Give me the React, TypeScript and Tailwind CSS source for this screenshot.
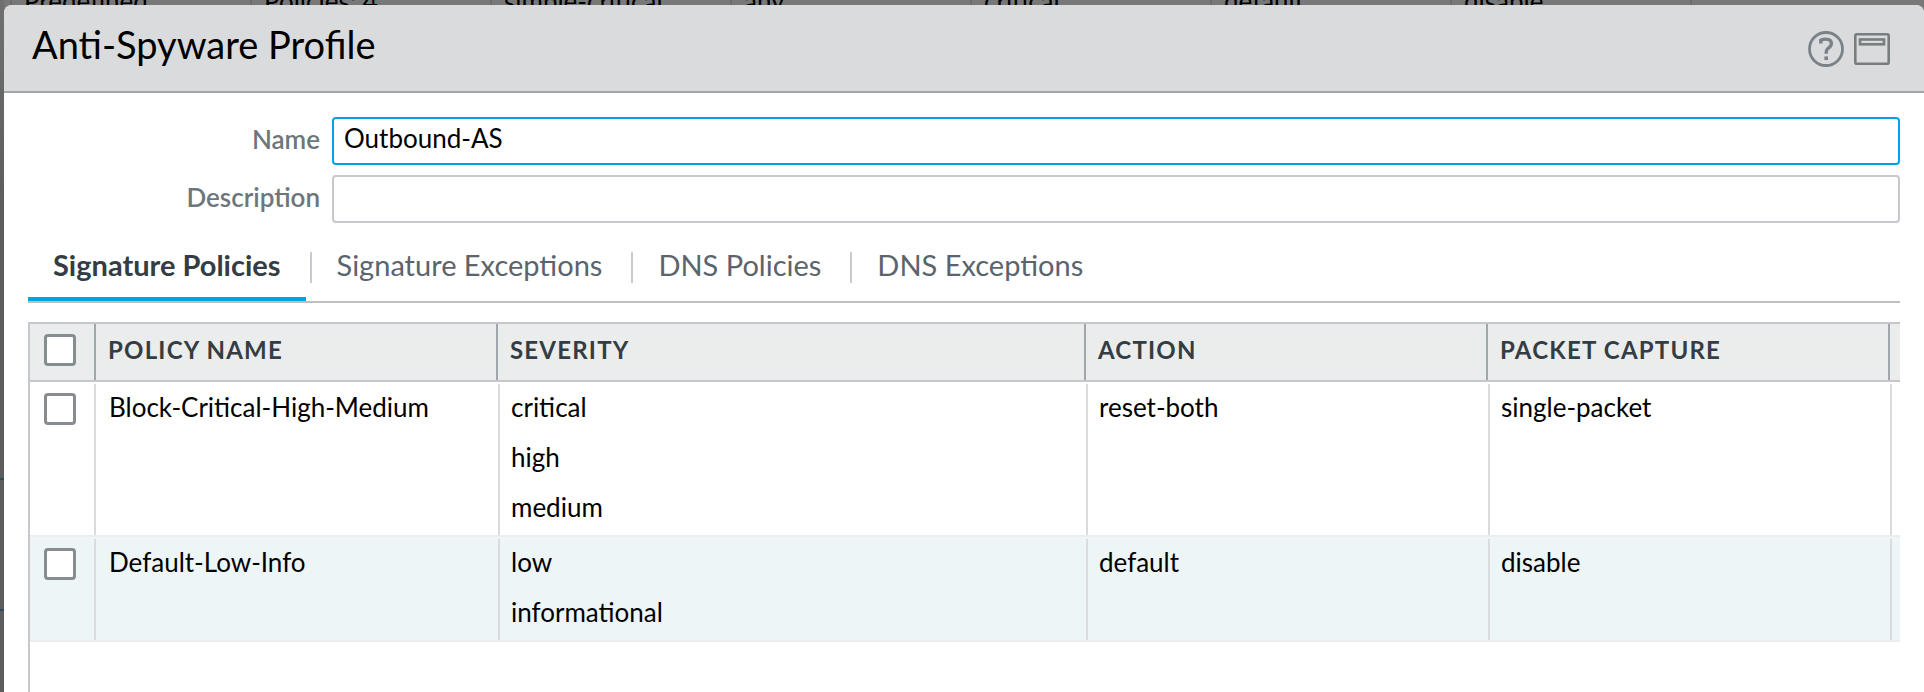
import { useState } from "react";

type Policy = {
  name: string;
  severity: string[];
  action: string;
  capture: string;
};

const policies: Policy[] = [
  {
    name: "Block-Critical-High-Medium",
    severity: ["critical", "high", "medium"],
    action: "reset-both",
    capture: "single-packet",
  },
  {
    name: "Default-Low-Info",
    severity: ["low", "informational"],
    action: "default",
    capture: "disable",
  },
];

const tabs = ["Signature Policies", "Signature Exceptions", "DNS Policies", "DNS Exceptions"];

const columns = ["Policy Name", "Severity", "Action", "Packet Capture"];

const backdropCells = ["Predefined", "Policies: 4", "simple-critical", "any", "critical", "default", "disable"];

function Checkbox({ label }: { label: string }) {
  return (
    <input
      type="checkbox"
      aria-label={label}
      className="block size-8 appearance-none rounded-sm border-3 border-[#868d92] bg-white checked:bg-[#00a3e8]"
    />
  );
}

function HelpIcon() {
  return (
    <svg viewBox="0 0 36 36" className="size-9" fill="none" stroke="#7b8287" aria-hidden="true">
      <circle cx="18" cy="18" r="16.5" strokeWidth="2.8" />
      <path d="M12.800 12.600V9.300c1.500-.8 3.200-1.200 5-1.200 3.700 0 5.600 1.600 5.600 4.300 0 2.200-1.200 3.300-2.900 4.600-1.700 1.300-2.300 2-2.300 3.800v2" strokeWidth="3.400" />
      <path d="M18.200 25.400v3.600" strokeWidth="3.600" />
    </svg>
  );
}

function WindowIcon() {
  return (
    <svg viewBox="0 0 36 32" className="h-8 w-9" fill="none" stroke="#787d80" aria-hidden="true">
      <rect x="1.300" y="1.300" width="33.400" height="29.400" rx="1.500" strokeWidth="2.600" />
      <rect x="6" y="6.500" width="24" height="4.800" strokeWidth="2.600" />
    </svg>
  );
}

export default function App() {
  const [active, setActive] = useState(0);
  const [name, setName] = useState("Outbound-AS");
  const [description, setDescription] = useState("");

  return (
    <div className="relative flex min-h-screen flex-col overflow-hidden bg-[#787878] font-[Lato,sans-serif] text-[26px] text-black">
      <div className="absolute inset-x-0 -top-1 flex h-3" aria-hidden="true">
        {backdropCells.map((cell) => (
          <div key={cell} className="w-60 shrink-0 border-l-2 border-[#6c6c6c] pl-3 leading-[10px] first:ml-[10px]">
            {cell}
          </div>
        ))}
        <div className="border-l-2 border-[#6c6c6c]" />
      </div>
      <div
        className="absolute inset-y-0 left-0 w-1 bg-linear-to-b from-[#707070] to-[#5b5e5d] to-30% pt-[478px]"
        aria-hidden="true"
      >
        <div className="h-[133px] border-y-2 border-[#2b4c5c]" />
      </div>

      <section role="dialog" aria-labelledby="dialog-title" className="relative mt-[5px] ml-1 flex flex-1 flex-col rounded-t-lg bg-white">
        <header className="flex h-22 items-start justify-between rounded-t-lg border-b-2 border-[#a0a6ab] bg-[#dadbdd] pr-[34px] pl-7">
          <h1 id="dialog-title" className="pt-[15px] text-[38px] leading-[48px]">
            Anti-Spyware Profile
          </h1>
          <div className="flex items-center gap-[10px] pt-[26px]">
            <button type="button" aria-label="Help">
              <HelpIcon />
            </button>
            <button type="button" aria-label="Maximize">
              <WindowIcon />
            </button>
          </div>
        </header>

        <div className="flex flex-1 flex-col px-6 pt-6">
          <form className="grid grid-cols-[292px_1fr] gap-x-3 gap-y-[10px]">
            <label
              htmlFor="profile-name"
              className="text-right leading-[44px] font-semibold text-[#6d767d]"
            >
              Name
            </label>
            <input
              id="profile-name"
              value={name}
              onChange={(event) => setName(event.target.value)}
              className="h-12 w-full rounded border-2 border-[#00a3e8] bg-white px-[10px] pb-1.5 outline-none"
            />
            <label
              htmlFor="profile-description"
              className="text-right leading-[44px] font-semibold text-[#6d767d]"
            >
              Description
            </label>
            <input
              id="profile-description"
              value={description}
              onChange={(event) => setDescription(event.target.value)}
              className="h-12 w-full rounded border-2 border-[#c5c9cd] bg-white px-[10px] pb-1.5 outline-none"
            />
          </form>

          <div role="tablist" className="mt-[13px] flex h-[67px] border-b-2 border-[#bcbec0] text-[29px] text-[#5a646d]">
            {tabs.map((tab, index) => (
              <div key={tab} className="group flex items-start">
                <div className="mt-4 h-[31px] w-0.5 bg-[#c7cbce] group-first:hidden" />
                <button
                  type="button"
                  role="tab"
                  aria-selected={index === active}
                  onClick={() => setActive(index)}
                  className="mr-1 h-[65px] rounded-t-sm border-b-4 border-transparent px-[25px] pb-1 aria-selected:border-[#00a3e8] aria-selected:font-bold aria-selected:text-[#343c44]"
                >
                  {tab}
                </button>
              </div>
            ))}
          </div>

          <div className="mt-[19px] flex-1 border-l-2 border-[#c5c9cd]">
            <table className="w-full table-fixed border-separate border-spacing-0">
              <colgroup>
                <col className="w-[66px]" />
                <col className="w-[402px]" />
                <col />
                <col className="w-[402px]" />
                <col className="w-[402px]" />
                <col className="w-[10px]" />
              </colgroup>
              <thead>
                <tr className="h-15 bg-[#ebedec] text-left text-[#343c44]">
                  <th className="border-y-2 border-[#c5c9cd] p-0">
                    <div className="flex h-14 items-center border-r-2 border-[#9fa7ac] pb-1 pl-[14px]">
                      <Checkbox label="Select all policies" />
                    </div>
                  </th>
                  {columns.map((column) => (
                    <th key={column} className="border-y-2 border-[#c5c9cd] p-0 text-2xl font-bold tracking-wider uppercase">
                      <div className="flex h-14 items-center border-r-2 border-[#9fa7ac] pb-1 pl-3">{column}</div>
                    </th>
                  ))}
                  <th className="border-y-2 border-[#c5c9cd] p-0" aria-hidden="true" />
                </tr>
              </thead>
              <tbody>
                {policies.map((policy) => (
                  <tr key={policy.name} className="align-top even:bg-[#edf5f7]">
                    <td className="h-px border-b-2 border-[#ebedee] p-0 pt-0.5">
                      <div className="h-full border-r-2 border-[#d9dbdc] pt-[9px] pl-[14px]">
                        <Checkbox label={"Select " + policy.name} />
                      </div>
                    </td>
                    {[[policy.name], policy.severity, [policy.action], [policy.capture]].map((lines, index) => (
                      <td key={index} className="group h-px border-b-2 border-[#ebedee] p-0 pt-0.5">
                        <div className="flow-root h-full border-l-2 border-[#d9dbdc] pb-[3px] pl-[11px] group-nth-2:border-l-0 group-nth-2:pl-[13px]">
                          <div className="-mt-0.5">
                            {lines.map((line) => (
                              <div key={line} className="leading-[50px]">
                                {line}
                              </div>
                            ))}
                          </div>
                        </div>
                      </td>
                    ))}
                    <td className="h-px border-b-2 border-[#ebedee] p-0 pt-0.5">
                      <div className="h-full border-l-2 border-[#d9dbdc]" />
                    </td>
                  </tr>
                ))}
              </tbody>
            </table>
          </div>
        </div>
      </section>
    </div>
  );
}
